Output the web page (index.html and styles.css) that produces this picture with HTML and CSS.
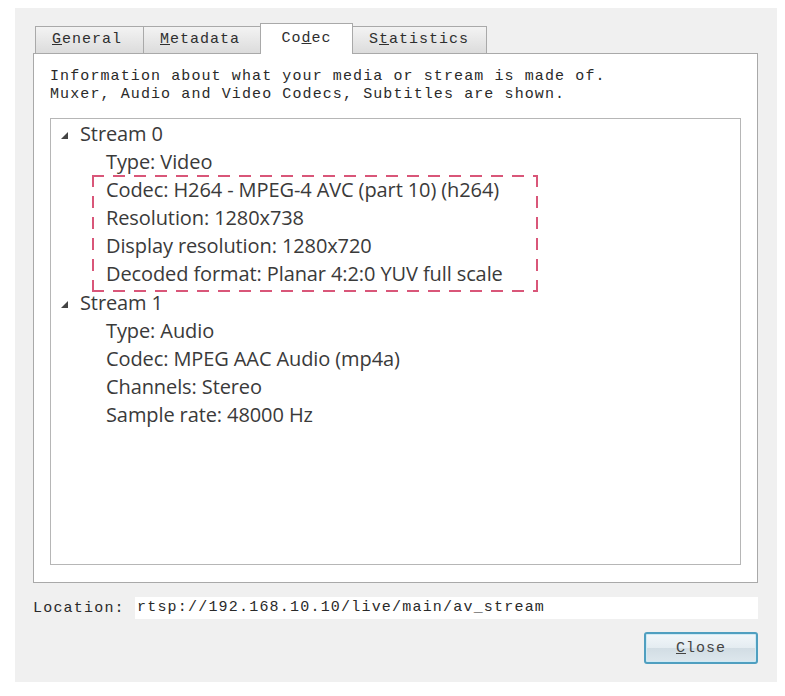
FILE: index.html
```html
<!DOCTYPE html>
<html>
<head>
<meta charset="utf-8">
<link rel="stylesheet" href="styles.css">
</head>
<body>
<div class="dialog">
  <div class="tabs">
    <div class="tab"><u>G</u>eneral</div>
    <div class="tab"><u>M</u>etadata</div>
    <div class="tab active">Co<u>d</u>ec</div>
    <div class="tab">S<u>t</u>atistics</div>
  </div>
  <div class="panel">
    <p class="desc">Information about what your media or stream is made of.<br>Muxer, Audio and Video Codecs, Subtitles are shown.</p>
    <div class="tree">
      <div class="node">
        <div class="row parent"><svg class="arrow" width="7" height="7" viewBox="0 0 7 7"><polygon points="7,0 7,7 0,7" fill="#444"/></svg>Stream 0</div>
        <div class="row child">Type: Video</div>
        <div class="highlight">
          <div class="row child">Codec: H264 - MPEG-4 AVC (part 10) (h264)</div>
          <div class="row child">Resolution: 1280x738</div>
          <div class="row child">Display resolution: 1280x720</div>
          <div class="row child">Decoded format: Planar 4:2:0 YUV full scale</div>
        </div>
      </div>
      <div class="node">
        <div class="row parent"><svg class="arrow" width="7" height="7" viewBox="0 0 7 7"><polygon points="7,0 7,7 0,7" fill="#444"/></svg>Stream 1</div>
        <div class="row child">Type: Audio</div>
        <div class="row child">Codec: MPEG AAC Audio (mp4a)</div>
        <div class="row child">Channels: Stereo</div>
        <div class="row child">Sample rate: 48000 Hz</div>
      </div>
    </div>
  </div>
  <div class="location">
    <span class="loc-label">Location:</span>
    <div class="loc-field">rtsp://192.168.10.10/live/main/av_stream</div>
  </div>
  <div class="actions">
    <button class="btn"><u>C</u>lose</button>
  </div>
</div>
</body>
</html>
```
FILE: styles.css
```css
html, body {
  margin: 0;
  padding: 0;
  background: #ffffff;
}
body {
  padding: 8px 8px 0 15px;
}
.dialog {
  width: 762px;
  height: 674px;
  background: #f0f0f0;
  box-sizing: border-box;
  padding: 15px 19px 0 18px;
  display: flex;
  flex-direction: column;
  font-family: "Liberation Mono", monospace;
  color: #2a2a2a;
}
.tabs {
  display: flex;
  align-items: flex-end;
  height: 30px;
  padding-left: 2px;
  position: relative;
  z-index: 1;
}
.tab {
  height: 27px;
  box-sizing: border-box;
  border: 1px solid #a9a9a9;
  border-bottom: none;
  background: linear-gradient(#f3f3f3, #dcdcdc);
  font-size: 15px;
  letter-spacing: 1px;
  line-height: 26px;
  padding: 0 16px;
  margin-right: -1px;
  color: #2f2f2f;
}
.tab:nth-child(1) { width: 109px; }
.tab:nth-child(2) { width: 118px; }
.tab:nth-child(4) { width: 135px; }
.tab.active {
  height: 31px;
  width: 93px;
  margin-bottom: -1px;
  background: #ffffff;
  padding-top: 2px;
  text-align: center;
  padding-left: 0;
  padding-right: 0;
}
.tab u { text-decoration-thickness: 1px; }
.panel {
  height: 530px;
  box-sizing: border-box;
  border: 1px solid #a9a9a9;
  background: #ffffff;
  padding: 14px 16px 17px 16px;
  display: flex;
  flex-direction: column;
}
.desc {
  margin: 0 0 14px 0;
  font-size: 15px;
  letter-spacing: 1.1px;
  line-height: 18px;
  color: #2a2a2a;
}
.tree {
  flex: 1;
  border: 1px solid #b6b6b6;
  padding: 1px 0 0 0;
  font-family: "Open Sans", "Noto Sans", sans-serif;
  font-size: 20px;
  letter-spacing: -0.1px;
  color: #3a3a3a;
}
.row {
  height: 28px;
  line-height: 28px;
  white-space: nowrap;
}
.parent {
  padding-left: 10px;
  display: flex;
  align-items: center;
}
.arrow {
  margin-right: 12px;
  margin-top: 2px;
}
.child {
  padding-left: 55px;
}
.highlight {
  margin-left: 41px;
  width: 446px;
  box-sizing: border-box;
  padding: 1px 2px 4px 2px;
  margin-top: -1px;
  margin-bottom: -3px;
  --dash: #d95679;
  background:
    repeating-linear-gradient(90deg, var(--dash) 0 12px, transparent 12px 21px) left top / 100% 2px no-repeat,
    repeating-linear-gradient(90deg, var(--dash) 0 12px, transparent 12px 21px) left bottom / 100% 2px no-repeat,
    repeating-linear-gradient(180deg, var(--dash) 0 12px, transparent 12px 21px) left top / 2px 100% no-repeat,
    repeating-linear-gradient(180deg, var(--dash) 0 12px, transparent 12px 21px) right top / 2px 100% no-repeat;
}
.highlight .child {
  padding-left: 12px;
  height: 28px;
}
.location {
  display: flex;
  align-items: center;
  margin-top: 14px;
  height: 22px;
}
.loc-label {
  font-size: 15px;
  letter-spacing: 1.2px;
  width: 102px;
  color: #2a2a2a;
}
.loc-field {
  flex: 1;
  height: 22px;
  background: #ffffff;
  font-size: 15px;
  letter-spacing: 1.2px;
  line-height: 22px;
  padding-left: 2px;
  color: #2a2a2a;
}
.actions {
  display: flex;
  justify-content: flex-end;
  margin-top: 13px;
}
.btn {
  width: 114px;
  height: 32px;
  border: 2px solid #4f9fc0;
  border-radius: 3px;
  background: linear-gradient(#f2f7fa 0%, #e4ecf1 50%, #d2dde4 51%, #dde7ed 100%);
  box-shadow: inset 0 0 0 1px #cfeaf5;
  font-family: "Liberation Mono", monospace;
  font-size: 15px;
  letter-spacing: 1px;
  color: #444;
  padding: 0;
}
```
